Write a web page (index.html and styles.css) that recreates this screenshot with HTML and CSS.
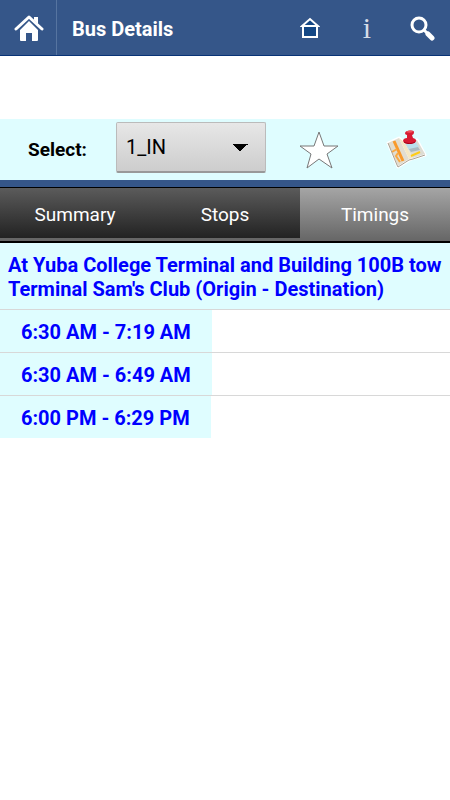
FILE: index.html
```html
<!DOCTYPE html>
<html lang="en">
<head>
  <meta charset="UTF-8">
  <meta name="viewport" content="width=device-width, initial-scale=1.0">
  <title>Bus Details</title>
  <link rel="stylesheet" href="styles.css">
</head>
<body>
  <header class="topbar">
    <a href="#" class="home" aria-label="Home">
      <svg width="30" height="28" viewBox="0 0 30 28">
        <path d="M20 3h4v7l-4-4z" fill="#fff"/>
        <path d="M2 15L15 3l13 12" fill="none" stroke="#fff" stroke-width="3" stroke-linecap="round" stroke-linejoin="round"/>
        <path d="M15 7l9 9v10q0 1-1 1h-5v-8h-6v8H7q-1 0-1-1V16z" fill="#fff"/>
      </svg>
    </a>
    <h1>Bus Details</h1>
    <nav class="actions">
      <a href="#" aria-label="Start page">
        <svg width="20" height="22" viewBox="0 0 20 22">
          <path d="M4 9h12v10H4z" fill="#144785"/>
          <path d="M5 8l5-5 5 5z" fill="#144785"/>
          <path d="M3 9v11h14V9M2 9h16L10 2z" fill="none" stroke="#fff" stroke-width="2"/>
        </svg>
      </a>
      <a href="#" class="info">i</a>
      <a href="#" aria-label="Search">
        <svg width="26" height="26" viewBox="0 0 26 26">
          <circle cx="10" cy="10" r="7" fill="none" stroke="#fff" stroke-width="3"/>
          <path d="M15 15l3 3" stroke="#fff" stroke-width="3"/>
          <path d="M19 19l4 4" stroke="#fff" stroke-width="5" stroke-linecap="round"/>
        </svg>
      </a>
    </nav>
  </header>

  <form class="route">
    <label for="route">Select:</label>
    <select id="route">
      <option>1_IN</option>
    </select>
    <button type="button" class="star" aria-label="Favorite">
      <svg width="42" height="40" viewBox="0 0 42 40">
        <path d="M21 2l5 14h14L29 24l5 14-13-9-12 9 4-14L2 16h14z" fill="#fff" stroke="#777" stroke-width="1"/>
      </svg>
    </button>
    <button type="button" class="map" aria-label="Map">
      <svg width="42" height="42" viewBox="0 0 42 42">
        <path d="M3 14l11-5 5 4 13-2 8 15-14 4-13 8z" fill="#fff" stroke="#fff" stroke-width="3" stroke-linejoin="round"/>
        <path d="M3 14l11-5 10 21-11 7z" fill="#e2ddd0"/>
        <path d="M14 9l5 4 9 16-4 1z" fill="#f4e7c4"/>
        <path d="M19 13l13-2 8 14-12 4z" fill="#dddcd3"/>
        <path d="M21 15l9-3 4 6-10 3z" fill="#badfeb"/>
        <path d="M24 20l9-2 2 3-9 2z" fill="#a9bac0"/>
        <path d="M9 12l9 20" fill="none" stroke="#f99a2b" stroke-width="3"/>
        <path d="M7 23l5-3M13 24l-2 3 4 6" fill="none" stroke="#f9a943" stroke-width="2"/>
        <path d="M26 27l9-4" stroke="#ffcd16" stroke-width="2"/>
        <path d="M3 14l9 22 1 2 11-7 4-1 12-4" fill="none" stroke="#aaa293" stroke-width="1"/>
        <path d="M20 4c1-3 9-3 9-1 0 2-1 3-2 3l1 3c4 1 4 4 1 5-4 2-10 1-11-2 0-2 2-3 4-3V6c-1 0-2-1-2-2z" fill="#d81b32"/>
        <path d="M21 3c2-2 6-2 7 0-2 1-5 1-7 0z" fill="#f0525c"/>
        <path d="M19 13c3 2 8 2 11 0" fill="none" stroke="#a00018" stroke-width="1"/>
      </svg>
    </button>
  </form>

  <nav class="tabs">
    <a href="#">Summary</a>
    <a href="#">Stops</a>
    <a href="#" class="active">Timings</a>
  </nav>

  <main>
    <h2>At Yuba College Terminal and Building 100B tow<br>Terminal Sam's Club (Origin - Destination)</h2>
    <ul class="timings">
      <li><span>6:30 AM - 7:19 AM</span></li>
      <li><span>6:30 AM - 6:49 AM</span></li>
      <li><span>6:00 PM - 6:29 PM</span></li>
    </ul>
  </main>
</body>
</html>
```
FILE: styles.css
```css
* {
  margin: 0;
  padding: 0;
  box-sizing: border-box;
}
body {
  background: #fff;
  font-family: Roboto, "Liberation Sans", sans-serif;
  font-size: 20px;
}
a {
  color: #fff;
  text-decoration: none;
}
svg {
  display: block;
}
.topbar {
  display: flex;
  align-items: center;
  height: 56px;
  background: #355689;
  border-bottom: 1px solid #083376;
}
.home {
  display: flex;
  align-items: center;
  height: 100%;
  padding: 0 12px 0 14px;
  border-right: 1px solid #5674a0;
}
h1 {
  flex: 1;
  padding: 2px 0 0 15px;
  color: #fff;
  font-size: 20px;
  font-weight: 700;
}
.actions {
  display: flex;
}
.actions a {
  display: flex;
  align-items: center;
  justify-content: center;
  width: 56px;
  height: 56px;
}
.actions .info {
  padding-left: 2px;
  color: #d5dce8;
  font-family: "Liberation Serif", serif;
  font-size: 30px;
}
.route {
  display: flex;
  align-items: center;
  height: 68px;
  margin-top: 63px;
  padding-left: 28px;
  background: #dffdff;
  border-bottom: 7px solid #355689;
}
.route label {
  width: 88px;
  font-size: 19px;
  font-weight: 700;
}
.route select {
  width: 150px;
  height: 51px;
  margin-bottom: 4px;
  padding: 0 9px;
  appearance: none;
  color: #000;
  background: conic-gradient(from -45deg at 50% 100%, #000 90deg, transparent 0) right 17px top 21px / 16px 8px no-repeat, linear-gradient(#e7e7e7, #cdcdcd);
  border: 1px solid #bbb;
  border-bottom: 2px solid #999;
  border-radius: 2px;
  font-family: inherit;
  font-size: 20px;
}
.route button {
  background: none;
  border: none;
}
.star {
  margin-left: 32px;
}
.map {
  margin-left: 45px;
}
.tabs {
  display: flex;
  height: 56px;
  background: #666;
  border-top: 1px solid #000;
  border-bottom: 2px solid #000;
}
.tabs a {
  flex: 1;
  height: 50px;
  background: linear-gradient(#5b5b5b, #222);
  font-size: 19px;
  line-height: 54px;
  text-align: center;
}
.tabs .active {
  height: 53px;
  background: linear-gradient(#a5a5a5, #666);
}
h2 {
  padding: 10px 8px 8px;
  color: #00f;
  background: #dffdff;
  border-bottom: 1px solid #d8d8d8;
  font-size: 20px;
  font-weight: 700;
  line-height: 24px;
  white-space: nowrap;
  overflow: hidden;
}
.timings {
  list-style: none;
}
.timings li {
  display: flex;
  border-bottom: 1px solid #d8d8d8;
}
.timings li:last-child {
  border-bottom: none;
}
.timings span {
  padding: 2px 21px 0;
  color: #00f;
  background: #dffdff;
  font-weight: 700;
  line-height: 40px;
}
```
